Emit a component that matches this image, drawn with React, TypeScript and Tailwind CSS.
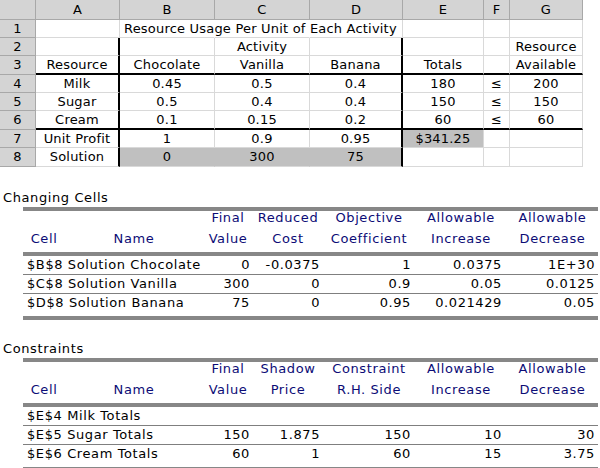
const COLS = ['A', 'B', 'C', 'D', 'E', 'F', 'G'];

const sheet: string[][] = [
  ['', 'Resource Usage Per Unit of Each Activity', '', '', '', '', ''],
  ['', '', 'Activity', '', '', '', 'Resource'],
  ['Resource', 'Chocolate', 'Vanilla', 'Banana', 'Totals', '', 'Available'],
  ['Milk', '0.45', '0.5', '0.4', '180', '≤', '200'],
  ['Sugar', '0.5', '0.4', '0.4', '150', '≤', '150'],
  ['Cream', '0.1', '0.15', '0.2', '60', '≤', '60'],
  ['Unit Profit', '1', '0.9', '0.95', '$341.25', '', ''],
  ['Solution', '0', '300', '75', '', '', ''],
];

function cellClass(r: number, c: number) {
  const shaded = (r === 8 && c >= 1 && c <= 3) || (r === 7 && c === 4);
  let right = 'border-r';
  if (r >= 2 && (c === 0 || c === 3)) right = 'border-r-2 border-r-black';
  else if (r === 1 && (c === 1 || c === 2)) right = 'border-r border-r-transparent';
  else if (r === 8 && (c === 1 || c === 2)) right = 'border-r border-r-[#c0c0c0]';
  const bottom = r === 3 || r === 6 ? 'border-b-2 border-b-black' : 'border-b';
  const align = r === 1 && c === 1 ? 'justify-start pl-1' : 'justify-center';
  return `flex items-center whitespace-nowrap border-[#d9d9d9] ${right} ${bottom} ${align} ${shaded ? 'bg-[#c0c0c0]' : ''}`;
}

function Sheet() {
  return (
    <div
      className="grid w-[583px] grid-cols-[36px_84px_95px_95px_93px_81px_26px_73px] grid-rows-[20px_18px_18px_19px_18px_18px_19px_18px_19px] text-[13px] tracking-[0.2px] text-black"
      style={{ fontFamily: '"DejaVu Sans", sans-serif' }}
    >
      <div className="border-r border-b border-[#a8a8a8] bg-[#d4d4d4]" />
      {COLS.map((c) => (
        <div key={c} className="flex items-center justify-center border-r border-b border-[#a8a8a8] bg-[#d4d4d4]">
          {c}
        </div>
      ))}
      {sheet.map((row, i) => (
        <>
          <div key={`h${i}`} className="flex items-center justify-center border-r border-b border-[#a8a8a8] bg-[#d4d4d4]">
            {i + 1}
          </div>
          {row.map((v, c) => (
            <div key={`${i}-${c}`} className={cellClass(i + 1, c)}>
              {v}
            </div>
          ))}
        </>
      ))}
    </div>
  );
}

type Report = {
  title: string;
  head1: string[];
  head2: string[];
  rows: { name: string; vals: string[] }[];
};

const changing: Report = {
  title: 'Changing Cells',
  head1: ['', '', 'Final', 'Reduced', 'Objective', 'Allowable', 'Allowable'],
  head2: ['Cell', 'Name', 'Value', 'Cost', 'Coefficient', 'Increase', 'Decrease'],
  rows: [
    { name: '$B$8 Solution Chocolate', vals: ['0', '-0.0375', '1', '0.0375', '1E+30'] },
    { name: '$C$8 Solution Vanilla', vals: ['300', '0', '0.9', '0.05', '0.0125'] },
    { name: '$D$8 Solution Banana', vals: ['75', '0', '0.95', '0.021429', '0.05'] },
  ],
};

const constraints: Report = {
  title: 'Constraints',
  head1: ['', '', 'Final', 'Shadow', 'Constraint', 'Allowable', 'Allowable'],
  head2: ['Cell', 'Name', 'Value', 'Price', 'R.H. Side', 'Increase', 'Decrease'],
  rows: [
    { name: '$E$4 Milk Totals', vals: ['', '', '', '', ''] },
    { name: '$E$5 Sugar Totals', vals: ['150', '1.875', '150', '10', '30'] },
    { name: '$E$6 Cream Totals', vals: ['60', '1', '60', '15', '3.75'] },
  ],
};

// right padding of the numeric columns, so values line up as in the report
const PAD = ['pr-[3px]', 'pr-[3px]', 'pr-[4px]', 'pr-[5px]', 'pr-[3px]'];
const GRID = 'grid grid-cols-[42px_138px_50px_70px_92px_92px_91px]';

function ReportTable({ report, top }: { report: Report; top: string }) {
  return (
    <div className={top}>
      <div className="pl-[3px] leading-[16px] text-black">{report.title}</div>
      <div className="ml-[23px] mt-px w-[575px]">
        <div className="h-[4px] bg-[#878787]" />
        <div className="pt-0 pb-[3px] text-[#0c0c76]">
          <div className={`${GRID} leading-[14px]`}>
            {report.head1.map((h, i) => (
              <div key={i} className="text-center">{h}</div>
            ))}
          </div>
          <div className={`${GRID} mt-[4px] leading-[20px]`}>
            {report.head2.map((h, i) => (
              <div key={i} className="text-center">{h}</div>
            ))}
          </div>
        </div>
        <div className="h-[4px] bg-[#878787]" />
        {report.rows.map((row, i) => (
          <div key={row.name}>
            <div className={`${GRID} leading-[18px] ${i === report.rows.length - 1 ? 'pb-[4px]' : ''}`}>
              <div className="col-span-2 pl-1 whitespace-nowrap">{row.name}</div>
              {row.vals.map((v, j) => (
                <div key={j} className={`text-right ${PAD[j]}`}>{v}</div>
              ))}
            </div>
            {i < report.rows.length - 1 && <div className="h-px bg-[#7f7f7f]" />}
          </div>
        ))}
        <div className="h-[4px] bg-[#878787]" />
      </div>
    </div>
  );
}

export default function App() {
  return (
    <div className="h-[468px] w-[600px] overflow-hidden bg-white">
      <Sheet />
      <div className="text-[13px] tracking-[0.6px] text-black" style={{ fontFamily: '"DejaVu Sans", sans-serif' }}>
        <ReportTable report={changing} top="mt-[23px]" />
        <ReportTable report={constraints} top="mt-[21px]" />
      </div>
    </div>
  );
}
